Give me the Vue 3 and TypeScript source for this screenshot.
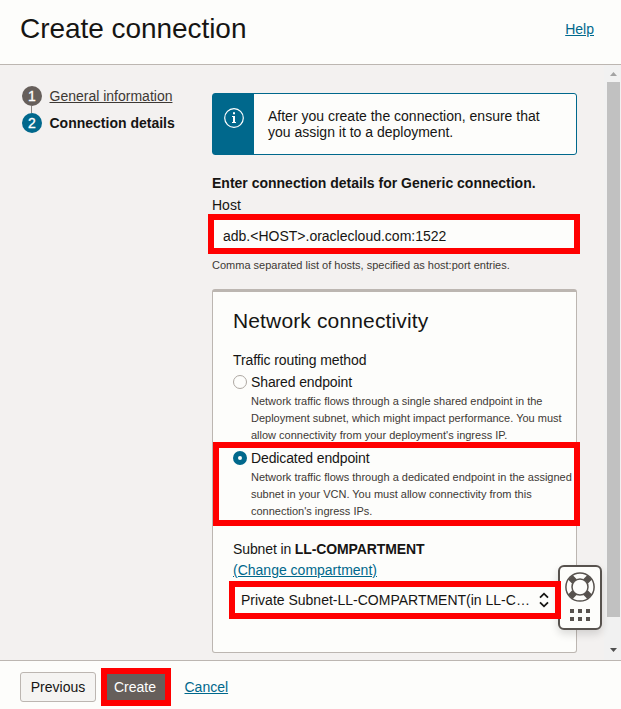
<script setup lang="ts">
import { ref } from 'vue'

interface Step {
  number: number
  label: string
  done: boolean
}

interface RoutingOption {
  id: string
  label: string
  lines: string[]
}

const steps: Step[] = [
  { number: 1, label: 'General information', done: true },
  { number: 2, label: 'Connection details', done: false },
]

const options: RoutingOption[] = [
  {
    id: 'shared',
    label: 'Shared endpoint',
    lines: [
      'Network traffic flows through a single shared endpoint in the',
      'Deployment subnet, which might impact performance. You must',
      "allow connectivity from your deployment's ingress IP.",
    ],
  },
  {
    id: 'dedicated',
    label: 'Dedicated endpoint',
    lines: [
      'Network traffic flows through a dedicated endpoint in the assigned',
      'subnet in your VCN. You must allow connectivity from this',
      "connection's ingress IPs.",
    ],
  },
]

const selected = ref('dedicated')
const host = ref('adb.<HOST>.oraclecloud.com:1522')
</script>

<template>
  <div class="dialog">
    <header class="header">
      <h1>Create connection</h1>
      <a class="link" href="#">Help</a>
    </header>

    <main class="body">
      <nav class="steps">
        <div v-for="step in steps" :key="step.number" class="step" :class="{ done: step.done }">
          <span class="badge">{{ step.number }}</span>
          <span class="step-label">{{ step.label }}</span>
        </div>
      </nav>

      <section class="form">
        <div class="alert">
          <div class="alert-icon">
            <svg width="20" height="20" viewBox="0 0 20 20" fill="none" stroke="#fff">
              <circle cx="10" cy="10" r="9.3" stroke-width="1.2" />
              <path d="M8 8.5h2v6M8 14.5h4" stroke-width="1.2" />
              <path d="M10 8v7" stroke-width="2" />
              <path d="M9 5.3h2" stroke-width="2" />
            </svg>
          </div>
          <p>After you create the connection, ensure that<br />you assign it to a deployment.</p>
        </div>

        <p class="intro">Enter connection details for Generic connection.</p>
        <label class="label" for="host">Host</label>
        <div class="host marked">
          <input id="host" v-model="host" type="text" spellcheck="false" />
        </div>
        <p class="hint">Comma separated list of hosts, specified as host:port entries.</p>

        <div class="card">
          <h2>Network connectivity</h2>
          <p class="group-label">Traffic routing method</p>
          <div
            v-for="option in options"
            :key="option.id"
            class="option"
            :class="{ marked: option.id === selected }"
            @click="selected = option.id"
          >
            <span class="radio" :class="{ on: option.id === selected }"></span>
            <div>
              <div class="option-label">{{ option.label }}</div>
              <div v-for="line in option.lines" :key="line" class="option-line">{{ line }}</div>
            </div>
          </div>

          <p class="subnet-label">Subnet in <b>LL-COMPARTMENT</b></p>
          <p class="subnet-link"><a class="link" href="#">(Change compartment)</a></p>
          <div class="select marked">
            <span>Private Subnet-LL-COMPARTMENT(in LL-C…</span>
            <svg width="10" height="16" viewBox="0 0 10 16" fill="none" stroke="#161513" stroke-width="1.8">
              <path d="M1 5.7 5 1.7 9 5.7M1 10.3 5 14.3 9 10.3" />
            </svg>
          </div>
        </div>
      </section>

      <div class="scrollbar">
        <svg width="7" height="4" viewBox="0 0 7 4"><path d="M0 4 3.5 0 7 4z" fill="#a3a3a3" /></svg>
        <div class="thumb"></div>
        <svg width="7" height="4" viewBox="0 0 7 4"><path d="M0 0 3.5 4 7 0z" fill="#505050" /></svg>
      </div>

      <div class="support">
        <svg width="30" height="30" viewBox="0 0 30 30" fill="none" stroke="#57524e">
          <path
            d="M4.8 8.2 8.2 4.8M21.8 4.8 25.2 8.2M25.2 21.8 21.8 25.2M8.2 25.2 4.8 21.8"
            stroke="none"
          />
          <path d="M5.3 5.3 9.5 9.5M24.7 5.3 20.5 9.5M24.7 24.7 20.5 20.5M5.3 24.7 9.5 20.5" stroke-width="6.4" />
          <circle cx="15" cy="15" r="14.1" stroke-width="1.5" />
          <circle cx="15" cy="15" r="8" stroke-width="1.5" fill="#fdfdfb" />
        </svg>
        <div class="dots"><i v-for="n in 6" :key="n"></i></div>
      </div>
    </main>

    <footer class="footer">
      <button class="previous">Previous</button>
      <div class="create-wrap marked"><button class="create">Create</button></div>
      <a class="link" href="#">Cancel</a>
    </footer>
  </div>
</template>

<style>
body {
  margin: 0;
  overflow: hidden;
}
</style>

<style scoped>
* {
  box-sizing: border-box;
}
.dialog {
  display: flex;
  flex-direction: column;
  width: 621px;
  height: 709px;
  overflow: hidden;
  background: #fdfdfb;
  color: #161513;
  font: 14px/20px 'Liberation Sans', Arial, sans-serif;
}
h1,
h2,
p {
  margin: 0;
  font-weight: 400;
}
.link {
  color: #00688c;
  text-decoration: underline;
}
.header {
  display: flex;
  justify-content: space-between;
  height: 65px;
  padding: 13px 27px 0 20px;
  border-bottom: 1px solid #bcb6b1;
}
.header h1 {
  font-size: 28px;
  letter-spacing: -0.05px;
  line-height: 32px;
}
.header .link {
  line-height: 32px;
}
.body {
  position: relative;
  display: flex;
  height: 595px;
  background: #f3f1f0;
}
.steps {
  display: flex;
  flex-direction: column;
  gap: 7px;
  width: 212px;
  padding: 21px 0 0 22px;
}
.step {
  display: flex;
  gap: 7.5px;
  height: 20px;
}
.badge {
  width: 20px;
  height: 20px;
  border-radius: 50%;
  background: #00688c;
  color: #fff;
  text-align: center;
  -webkit-text-stroke: 0.3px #fff;
}
.step-label {
  font-weight: 700;
}
.done .badge {
  position: relative;
  background: #665f5b;
}
.done .badge::after {
  content: '';
  position: absolute;
  left: 9px;
  top: 20px;
  width: 1px;
  height: 7px;
  background: #8b8580;
}
.done .step-label {
  color: #3d3935;
  font-weight: 400;
  text-decoration: underline;
}
.form {
  width: 365px;
  padding-top: 28px;
}
.alert {
  display: flex;
  height: 62px;
  border: 1px solid #00688c;
  border-radius: 3px;
  background: #fdfdfb;
}
.alert-icon {
  width: 41px;
  padding: 14px 0 0 11px;
  background: #00688c;
}
.alert p {
  padding: 14px 0 0 14px;
  line-height: 16px;
}
.intro {
  margin-top: 18px;
  font-weight: 700;
}
.label {
  display: block;
  margin-top: 2px;
}
.marked {
  position: relative;
}
.marked::after {
  content: '';
  position: absolute;
  z-index: 3;
  border: 6px solid #f00;
  pointer-events: none;
}
.host {
  height: 33px;
  margin-top: 3px;
}
.host.marked::after {
  inset: -4px -3px -3px -4px;
}
.host input {
  width: 100%;
  height: 33px;
  padding: 2px 11px 0;
  border: 0;
  outline: 0;
  background: #fdfdfb;
  color: #161513;
  font: inherit;
}
.hint {
  margin-top: 4px;
  color: #3d3935;
  font-size: 11px;
}
.card {
  height: 364px;
  margin-top: 14px;
  padding: 15px 0 0 20px;
  border: 1px solid #bcb6b1;
  border-top-width: 3px;
  border-radius: 3px;
  background: #fdfdfb;
}
.card h2 {
  font-size: 21px;
  letter-spacing: 0.14px;
  line-height: 28px;
}
.group-label {
  margin-top: 15px;
  letter-spacing: -0.09px;
}
.option {
  display: flex;
  gap: 4px;
  height: 76px;
  padding-top: 2px;
}
.option.marked::after {
  inset: -4px -4px -4px -20px;
}
.radio {
  width: 14px;
  height: 14px;
  margin-top: 3px;
  flex: none;
  border: 1px solid #aea8a2;
  border-radius: 50%;
}
.radio.on {
  border: 5px solid #00688c;
}
.option-label {
  height: 21px;
  letter-spacing: -0.12px;
}
.option-line {
  height: 17px;
  color: #3d3935;
  font-size: 11px;
  line-height: 17px;
  white-space: nowrap;
}
.subnet-label {
  margin-top: 17px;
  letter-spacing: -0.12px;
}
.subnet-link {
  margin-top: 1px;
}
.select {
  display: flex;
  align-items: center;
  justify-content: space-between;
  width: 325px;
  height: 32px;
  margin-top: 4px;
  padding: 0 9px 0 8px;
  white-space: nowrap;
}
.select.marked::after {
  inset: -3px -3px -3px -4px;
}
.scrollbar {
  display: flex;
  flex-direction: column;
  align-items: center;
  justify-content: space-between;
  width: 17px;
  margin-left: 27px;
  padding: 7px 0 8px 1px;
  background: #f1f1f1;
}
.thumb {
  width: 13px;
  height: 535px;
  margin: 6px 0 auto 1px;
  background: #c1c1c1;
}
.support {
  position: absolute;
  left: 558px;
  top: 500px;
  z-index: 2;
  display: flex;
  flex-direction: column;
  align-items: center;
  width: 44px;
  height: 65px;
  padding-top: 5px;
  border: 2px solid #57524e;
  border-radius: 6px;
  background: #fdfdfb;
  box-shadow: 0 4px 8px rgba(0, 0, 0, 0.14);
}
.dots {
  display: grid;
  grid-template-columns: repeat(3, 4px);
  gap: 4px;
  margin-top: 7px;
}
.dots i {
  width: 4px;
  height: 4px;
  background: #57524e;
}
.footer {
  display: flex;
  align-items: center;
  height: 49px;
  padding: 4px 0 0 20px;
  border-top: 1px solid #bcb6b1;
}
.footer button {
  height: 30px;
  padding: 0;
  border-radius: 3px;
  font: inherit;
}
.previous {
  width: 76px;
  border: 1px solid #bcb6b1;
  background: #f5f4f2;
  color: #161513;
}
.create-wrap {
  display: flex;
  margin-left: 8px;
}
.create-wrap.marked::after {
  inset: -4px -3px;
}
.create-wrap .create {
  width: 64px;
  padding-right: 2px;
  border: 0;
  background: #665f5b;
  color: #fff;
}
.footer .link {
  margin-left: 16.5px;
}
</style>
